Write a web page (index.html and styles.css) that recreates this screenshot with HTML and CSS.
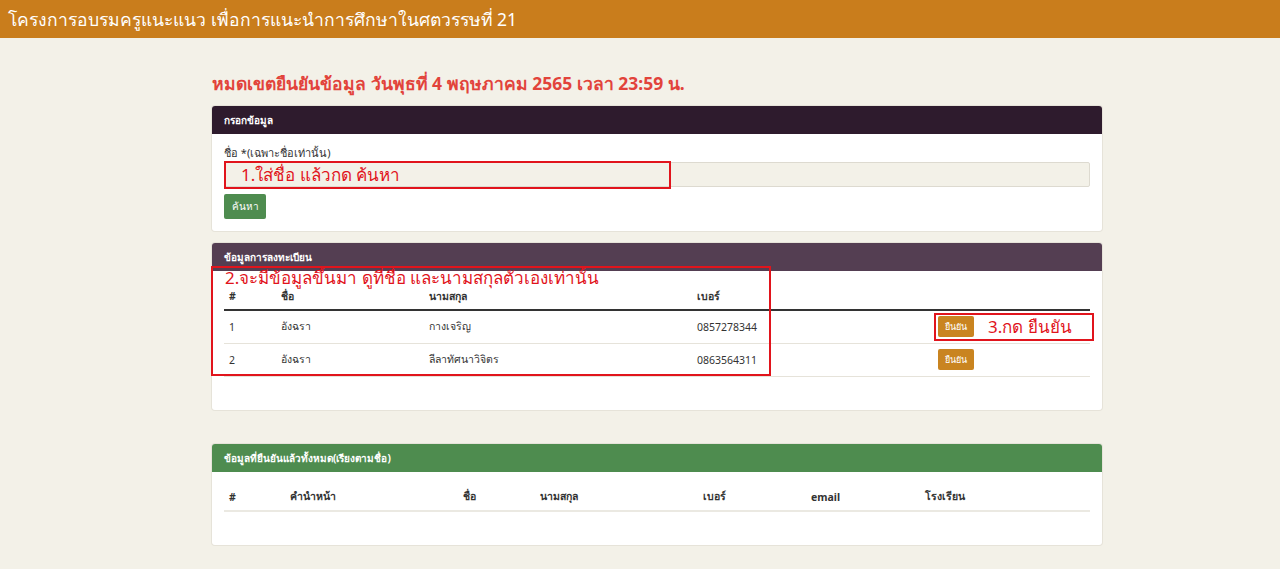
FILE: index.html
```html
<!DOCTYPE html>
<html lang="th">
<head>
<meta charset="utf-8">
<title>โครงการอบรมครูแนะแนว</title>
<link rel="stylesheet" href="styles.css">
</head>
<body>
<header class="topbar">โครงการอบรมครูแนะแนว เพื่อการแนะนำการศึกษาในศตวรรษที่ 21</header>
<main class="container">
  <h1 class="deadline">หมดเขตยืนยันข้อมูล วันพุธที่ 4 พฤษภาคม 2565 เวลา 23:59 น.</h1>

  <section class="card">
    <div class="card-head head-dark">กรอกข้อมูล</div>
    <div class="card-body form-body">
      <label class="label">ชื่อ *(เฉพาะชื่อเท่านั้น)</label>
      <input class="input" type="text">
      <div><button class="btn btn-green">ค้นหา</button></div>
      <div class="note note1">1.ใส่ชื่อ แล้วกด ค้นหา</div>
    </div>
  </section>

  <section class="card">
    <div class="card-head head-plum">ข้อมูลการลงทะเบียน</div>
    <div class="card-body table-body reg-body">
      <table class="tbl">
        <thead>
          <tr><th class="c1">#</th><th class="c2">ชื่อ</th><th class="c3">นามสกุล</th><th class="c4">เบอร์</th><th class="c5"></th><th></th></tr>
        </thead>
        <tbody>
          <tr><td>1</td><td>อังฉรา</td><td>กางเจริญ</td><td>0857278344</td><td><button class="btn btn-orange">ยืนยัน</button></td><td></td></tr>
          <tr><td>2</td><td>อังฉรา</td><td>ลีลาทัศนาวิจิตร</td><td>0863564311</td><td><button class="btn btn-orange">ยืนยัน</button></td><td></td></tr>
        </tbody>
      </table>
      <div class="note note2">2.จะมีข้อมูลขึ้นมา ดูที่ชื่อ และนามสกุลตัวเองเท่านั้น</div>
      <div class="note note3">3.กด ยืนยัน</div>
    </div>
  </section>

  <section class="card card-last">
    <div class="card-head head-green">ข้อมูลที่ยืนยันแล้วทั้งหมด(เรียงตามชื่อ)</div>
    <div class="card-body table-body">
      <table class="tbl tbl-light">
        <thead>
          <tr><th class="d1">#</th><th class="d2">คำนำหน้า</th><th class="d3">ชื่อ</th><th class="d4">นามสกุล</th><th class="d5">เบอร์</th><th class="d6">email</th><th>โรงเรียน</th></tr>
        </thead>
      </table>
    </div>
  </section>
</main>
</body>
</html>
```

FILE: styles.css
```css
* { box-sizing: border-box; }
html, body { margin: 0; padding: 0; }
body {
  background: #f3f1e8;
  font-family: "Noto Sans", "DejaVu Sans", sans-serif;
  color: #333;
  font-size: 11px;
}
.topbar {
  background: #c97d1c;
  color: #fff;
  height: 38px;
  line-height: 38px;
  padding-left: 8px;
  font-size: 17.5px;
}
.container {
  width: 890px;
  margin-left: 212px;
  padding-top: 34px;
}
.deadline {
  margin: 0 0 12px 0;
  color: #e2433b;
  font-size: 17.5px;
  font-weight: bold;
  line-height: 22px;
}
.card {
  background: #fff;
  border-radius: 3px;
  box-shadow: 0 0 0 1px #e6e3d9;
  margin-bottom: 12px;
}
.card-last { margin-top: 34px; }
.card-head {
  height: 28px;
  line-height: 28px;
  padding: 0 12px;
  color: #fff;
  font-size: 10px;
  font-weight: bold;
  border-radius: 3px 3px 0 0;
}
.head-dark { background: #2e1b2d; }
.head-plum { background: #543e52; }
.head-green { background: #4e8c4f; }
.card-body {
  position: relative;
  padding: 12px;
}
.label {
  display: block;
  line-height: 14px;
  margin-bottom: 2px;
  font-size: 11px;
}
.input {
  display: block;
  width: 100%;
  height: 25px;
  background: #f3f1e8;
  border: 1px solid #dddad0;
  border-radius: 2px;
  margin-bottom: 7px;
}
.btn {
  border: 0;
  color: #fff;
  font-family: inherit;
  border-radius: 2px;
  cursor: pointer;
}
.btn-green {
  background: #4e8c4f;
  height: 25px;
  width: 42px;
  font-size: 10px;
  padding: 0;
}
.btn-orange {
  background: #c98420;
  height: 21px;
  width: 36px;
  font-size: 9px;
  padding: 0;
  vertical-align: middle;
}
.table-body { padding-bottom: 33px; }
.tbl {
  width: 100%;
  border-collapse: collapse;
  font-size: 10.5px;
}
.tbl th {
  text-align: left;
  font-weight: bold;
  padding: 0 5px;
  height: 27px;
  border-bottom: 2px solid #333;
  vertical-align: middle;
}
.tbl td {
  padding: 0 5px;
  height: 33px;
  border-bottom: 1px solid #e6e3da;
  vertical-align: middle;
}
.tbl-light th { border-bottom: 2px solid #ebe9e2; }
.c1 { width: 52px; }
.c2 { width: 148px; }
.c3 { width: 268px; }
.c4 { width: 241px; }
.c5 { width: 60px; }
.d1 { width: 61px; }
.d2 { width: 173px; }
.d3 { width: 77px; }
.d4 { width: 163px; }
.d5 { width: 108px; }
.d6 { width: 114px; }
.note {
  position: absolute;
  border: 2px solid #e1141c;
  color: #e1141c;
  font-size: 17px;
  line-height: 24px;
}
.note1 {
  left: 12px; top: 27px;
  width: 447px; height: 28px;
  padding-left: 15px;
}
.note2 {
  left: -1px; top: -5px;
  width: 560px; height: 110px;
  padding-left: 12px;
  line-height: 20px;
}
.note3 {
  left: 722px; top: 42px;
  width: 160px; height: 28px;
  padding-left: 52px;
}
```
